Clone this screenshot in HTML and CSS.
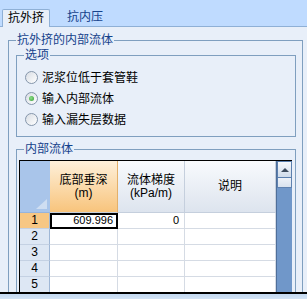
FILE: index.html
```html
<!DOCTYPE html>
<html lang="zh-CN">
  <head>
    <meta charset="UTF-8" />
    <title>抗外挤</title>
    <link rel="stylesheet" href="styles.css">
  </head>
  <body>
    <div class="tabstrip">
      <div class="tab active">抗外挤</div>
      <div class="tab">抗内压</div>
    </div>

    <div class="panel">
      <fieldset class="group outer">
        <legend>抗外挤的内部流体</legend>

        <fieldset class="group options">
          <legend>选项</legend>
          <label class="radio"><span class="circle"></span>泥浆位低于套管鞋</label>
          <label class="radio"><span class="circle checked"></span>输入内部流体</label>
          <label class="radio"><span class="circle"></span>输入漏失层数据</label>
        </fieldset>

        <fieldset class="group fluid">
          <legend>内部流体</legend>
          <div class="grid">
            <div class="cells">
              <div class="corner">
                <svg width="11" height="10" viewBox="0 0 11 10"><polygon points="11,0 11,10 0,10" fill="#cfdef2" /></svg>
              </div>
              <div class="colhead selected">底部垂深<br>(m)</div>
              <div class="colhead">流体梯度<br>(kPa/m)</div>
              <div class="colhead">说明</div>

              <div class="rowhead selected">1</div>
              <div class="cell num current">609.996</div>
              <div class="cell num">0</div>
              <div class="cell"></div>

              <div class="rowhead">2</div>
              <div class="cell"></div>
              <div class="cell"></div>
              <div class="cell"></div>

              <div class="rowhead">3</div>
              <div class="cell"></div>
              <div class="cell"></div>
              <div class="cell"></div>

              <div class="rowhead">4</div>
              <div class="cell"></div>
              <div class="cell"></div>
              <div class="cell"></div>

              <div class="rowhead">5</div>
              <div class="cell"></div>
              <div class="cell"></div>
              <div class="cell"></div>
            </div>
            <div class="vscroll">
              <div class="sbtn"><span class="arrow"></span></div>
              <div class="thumb"></div>
            </div>
          </div>
        </fieldset>
      </fieldset>
    </div>

    <div class="bottombar"></div>
  </body>
</html>
```

FILE: styles.css
```css
/* Page frame */
body {
  margin: 0;
  width: 307px;
  height: 299px;
  display: flex;
  flex-direction: column;
  overflow: hidden;
  background-color: #e8eff9;
  font: 12px/14px "Liberation Sans", "Noto Sans CJK SC", sans-serif;
  color: #000;
}

/* Tabs */
.tabstrip {
  flex: none;
  height: 26px;
  display: flex;
  align-items: flex-end;
  padding-left: 2px;
  background-color: #bfdbff;
  border-bottom: 1px solid #8fb0d6;
}

.tab {
  height: 17px;
  line-height: 17px;
  padding: 0 6px;
  margin-left: 11px;
  color: #15428b;
}

.tab.active {
  margin-left: 0;
  margin-bottom: -1px;
  padding: 0 5px;
  color: #000;
  background-color: #e8eff9;
  border: 1px solid #8fb0d6;
  border-bottom: none;
  border-radius: 2px 2px 0 0;
}

/* Content area */
.panel {
  flex: 1;
  min-height: 0;
  overflow: hidden;
  padding: 6px 4px 0 8px;
}

/* Group boxes */
.group {
  margin: 0;
  min-width: 0;
  border: 1px solid #7f9fbf;
}

.group legend {
  padding: 0 1px;
  line-height: 14px;
  color: #15428b;
}

.outer {
  padding: 0 6px 0 7px;
  border-bottom: none;
}

.options {
  margin-top: 1px;
  padding: 5px 7px 6px 7px;
}

.fluid {
  margin-top: 5px;
  padding: 4px 3px 0 2px;
  border-bottom: none;
}

.fluid legend {
  margin-left: 5px;
}

/* Radio buttons */
.radio {
  display: flex;
  align-items: center;
  height: 21px;
}

.circle {
  width: 11px;
  height: 11px;
  margin: 0 4px 0 1px;
  border: 1px solid #8596ab;
  border-radius: 50%;
  background: linear-gradient(135deg, #d8dde4, #ffffff);
  display: flex;
  align-items: center;
  justify-content: center;
}

.circle.checked::after {
  content: "";
  width: 5px;
  height: 5px;
  border-radius: 50%;
  background: radial-gradient(circle at 40% 40%, #8ee08a, #2f9a2f);
}

/* Data grid */
.grid {
  display: flex;
  border: 1px solid #000;
  background-color: #fff;
  height: 200px;
}

.cells {
  display: grid;
  grid-template-columns: 30px 68px 67px 91px;
  grid-template-rows: 52px;
  grid-auto-rows: 16px;
}

.cells > div {
  box-sizing: border-box;
}

.corner {
  display: flex;
  align-items: flex-end;
  justify-content: flex-end;
  padding: 0 3px 3px 0;
  background-color: #a9c5ea;
  border-bottom: 1px solid #97b4dc;
}

.colhead {
  display: flex;
  align-items: center;
  justify-content: center;
  text-align: center;
  line-height: 13px;
  background: linear-gradient(#f8fafd, #dde4ee);
  border-right: 1px solid #c5cfdd;
  border-bottom: 1px solid #c5cfdd;
}

.colhead.selected {
  background: linear-gradient(#fef0da, #f8c47c);
  border-right-color: #e3b06a;
}

.rowhead {
  text-align: center;
  line-height: 15px;
  background-color: #dde7f4;
  border-right: 1px solid #9fb7d6;
  border-bottom: 1px solid #c4d1e3;
}

.rowhead.selected {
  background-color: #f7c784;
}

.cell {
  line-height: 15px;
  border-right: 1px solid #d5dbe4;
  border-bottom: 1px solid #d5dbe4;
}

.cell.num {
  text-align: right;
  padding-right: 5px;
  font-size: 11px;
}

.cell.current {
  outline: 2px solid #000;
  outline-offset: -2px;
  padding-right: 4px;
}

/* Vertical scrollbar */
.vscroll {
  width: 15px;
  flex: none;
  background-color: #7097c9;
  border-left: 1px solid #4f6f9a;
}

.sbtn {
  height: 15px;
  display: flex;
  align-items: center;
  justify-content: center;
  background: linear-gradient(#f6f8fb, #cfdbea);
  border: 1px solid #5b7fae;
}

.arrow {
  width: 0;
  height: 0;
  border-left: 4px solid transparent;
  border-right: 4px solid transparent;
  border-bottom: 4px solid #3d4b5c;
}

.thumb {
  height: 9px;
  background: linear-gradient(#eef2f8, #d8e2ee);
  border: 1px solid #5f82b0;
  border-top: none;
}

/* Bottom edge */
.bottombar {
  flex: none;
  height: 5px;
  border-top: 2px solid #000;
  background: linear-gradient(#c3d9f1, #d3e3f5);
}
```
